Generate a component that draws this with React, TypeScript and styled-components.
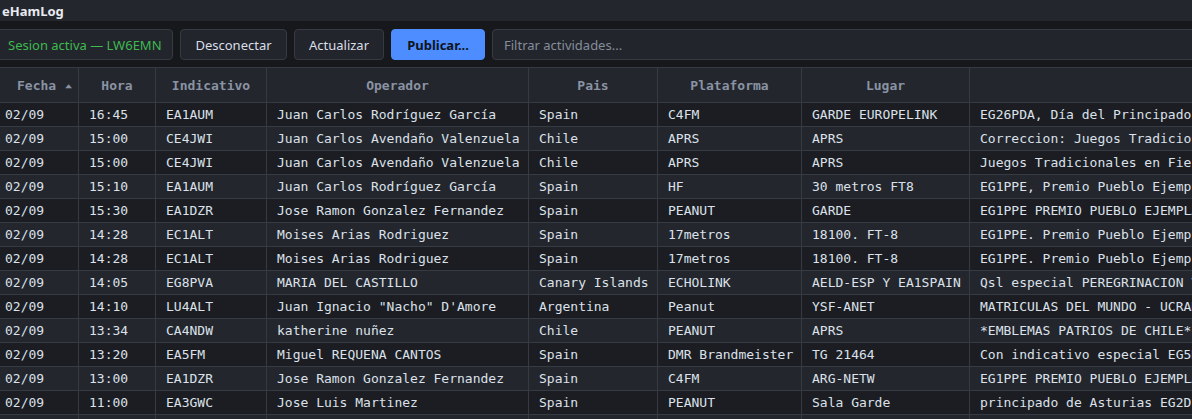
import React from "react";
import styled, { createGlobalStyle } from "styled-components";

const GlobalStyle = createGlobalStyle`
  html, body {
    margin: 0;
    padding: 0;
    background: #17181c;
    overflow: hidden;
  }
  #root {
    width: 1192px;
    overflow: hidden;
  }
`;

const Shell = styled.div`
  margin-left: -6px;
  width: 1400px;
  font-family: "Noto Sans", "Open Sans", sans-serif;
  color: #d9dee7;
`;

const TitleBar = styled.header`
  height: 21px;
  background: #23262d;
  padding-left: 8px;
  display: flex;
  align-items: center;
  font-size: 13px;
  font-weight: 700;
  color: #e8ebf0;
`;

const Toolbar = styled.div`
  display: flex;
  align-items: stretch;
  gap: 7px;
  padding: 8px 0 7px 0;
  background: #17181c;
  height: 31px;
`;

const Box = styled.div`
  box-sizing: border-box;
  display: flex;
  align-items: center;
  border: 1px solid #363a43;
  border-radius: 4px;
  background: #22252c;
  font-size: 13px;
`;

const Session = styled(Box)`
  width: 179px;
  padding-left: 13px;
  color: #3fb950;
`;

const Button = styled.button<{ $primary?: boolean; $w: number }>`
  box-sizing: border-box;
  width: ${(p) => p.$w}px;
  border: 1px solid ${(p) => (p.$primary ? "#4d8dff" : "#363a43")};
  border-radius: 4px;
  background: ${(p) => (p.$primary ? "#4d8dff" : "#22252c")};
  color: ${(p) => (p.$primary ? "#0f141c" : "#d9dee7")};
  font-family: "Noto Sans", "Open Sans", sans-serif;
  font-size: 13px;
  font-weight: ${(p) => (p.$primary ? 700 : 400)};
  padding: 0;
  cursor: pointer;
`;

const Filter = styled.input`
  box-sizing: border-box;
  width: 760px;
  border: 1px solid #363a43;
  border-radius: 4px;
  background: #22252c;
  color: #d9dee7;
  font-family: "Noto Sans", "Open Sans", sans-serif;
  font-size: 13px;
  padding: 0 11px;
  outline: none;
  &::placeholder {
    color: #858d9b;
  }
`;

const Table = styled.table`
  border-collapse: collapse;
  table-layout: fixed;
  width: 1400px;
  font-family: "DejaVu Sans Mono", "Liberation Mono", monospace;
  font-size: 13px;
`;

const HeadCell = styled.th<{ $sorted?: boolean }>`
  height: 34px;
  padding: 0 10px 0 ${(p) => (p.$sorted ? 22 : 10)}px;
  background: #23262d;
  color: #8a93a3;
  font-weight: 700;
  text-align: ${(p) => (p.$sorted ? "left" : "center")};
  border: 1px solid #363a43;
  white-space: nowrap;
  overflow: hidden;
`;

const SortMark = styled.span`
  display: inline-block;
  margin-left: 9px;
  font-size: 11px;
  transform: scaleY(0.6);
  vertical-align: 1px;
  color: #8a93a3;
`;

const Row = styled.tr<{ $alt: boolean }>`
  background: ${(p) => (p.$alt ? "#23262d" : "#1b1d22")};
`;

const Cell = styled.td`
  height: 23px;
  padding: 0 10px;
  color: #dce1ea;
  border: 1px solid #363a43;
  white-space: nowrap;
  overflow: hidden;
`;

const columns: { label: string; width: number }[] = [
  { label: "Fecha", width: 84 },
  { label: "Hora", width: 77 },
  { label: "Indicativo", width: 111 },
  { label: "Operador", width: 262 },
  { label: "Pais", width: 129 },
  { label: "Plataforma", width: 144 },
  { label: "Lugar", width: 168 },
  { label: "", width: 425 },
];

const rows: string[][] = [
  ["02/09", "16:45", "EA1AUM", "Juan Carlos Rodríguez García", "Spain", "C4FM", "GARDE EUROPELINK", "EG26PDA, Día del Principado de Asturias"],
  ["02/09", "15:00", "CE4JWI", "Juan Carlos Avendaño Valenzuela", "Chile", "APRS", "APRS", "Correccion: Juegos Tradicionales en Fiestas Patrias"],
  ["02/09", "15:00", "CE4JWI", "Juan Carlos Avendaño Valenzuela", "Chile", "APRS", "APRS", "Juegos Tradicionales en Fiestas Patrias"],
  ["02/09", "15:10", "EA1AUM", "Juan Carlos Rodríguez García", "Spain", "HF", "30 metros FT8", "EG1PPE, Premio Pueblo Ejemplar 2025"],
  ["02/09", "15:30", "EA1DZR", "Jose Ramon Gonzalez Fernandez", "Spain", "PEANUT", "GARDE", "EG1PPE PREMIO PUEBLO EJEMPLAR 2025"],
  ["02/09", "14:28", "EC1ALT", "Moises Arias Rodriguez", "Spain", "17metros", "18100. FT-8", "EG1PPE. Premio Pueblo Ejemplar 2025"],
  ["02/09", "14:28", "EC1ALT", "Moises Arias Rodriguez", "Spain", "17metros", "18100. FT-8", "EG1PPE. Premio Pueblo Ejemplar 2025"],
  ["02/09", "14:05", "EG8PVA", "MARIA DEL CASTILLO", "Canary Islands", "ECHOLINK", "AELD-ESP Y EA1SPAIN", "Qsl especial PEREGRINACION VIRGEN"],
  ["02/09", "14:10", "LU4ALT", "Juan Ignacio \"Nacho\" D'Amore", "Argentina", "Peanut", "YSF-ANET", "MATRICULAS DEL MUNDO - UCRANIA"],
  ["02/09", "13:34", "CA4NDW", "katherine nuñez", "Chile", "PEANUT", "APRS", "*EMBLEMAS PATRIOS DE CHILE*"],
  ["02/09", "13:20", "EA5FM", "Miguel REQUENA CANTOS", "Spain", "DMR Brandmeister", "TG 21464", "Con indicativo especial EG5DIA"],
  ["02/09", "13:00", "EA1DZR", "Jose Ramon Gonzalez Fernandez", "Spain", "C4FM", "ARG-NETW", "EG1PPE PREMIO PUEBLO EJEMPLAR 2025"],
  ["02/09", "11:00", "EA3GWC", "Jose Luis Martinez", "Spain", "PEANUT", "Sala Garde", "principado de Asturias EG2DPA"],
  ["02/09", "10:45", "EA1AUM", "Juan Carlos Rodríguez García", "Spain", "HF", "40 metros SSB", "EG26PDA, Día del Principado"],
];

export default function App() {
  return (
    <>
      <GlobalStyle />
      <Shell>
        <TitleBar>eHamLog</TitleBar>
        <Toolbar>
          <Session>Sesion activa — LW6EMN</Session>
          <Button $w={107}>Desconectar</Button>
          <Button $w={90}>Actualizar</Button>
          <Button $primary $w={94}>Publicar...</Button>
          <Filter placeholder="Filtrar actividades..." />
        </Toolbar>
        <Table>
          <colgroup>
            {columns.map((c, i) => (
              <col key={i} style={{ width: c.width }} />
            ))}
          </colgroup>
          <thead>
            <tr>
              {columns.map((c, i) => (
                <HeadCell key={i} $sorted={i === 0}>
                  {c.label}
                  {i === 0 && <SortMark>▲</SortMark>}
                </HeadCell>
              ))}
            </tr>
          </thead>
          <tbody>
            {rows.map((r, i) => (
              <Row key={i} $alt={i % 2 === 1}>
                {r.map((v, j) => (
                  <Cell key={j}>{v}</Cell>
                ))}
              </Row>
            ))}
          </tbody>
        </Table>
      </Shell>
    </>
  );
}
